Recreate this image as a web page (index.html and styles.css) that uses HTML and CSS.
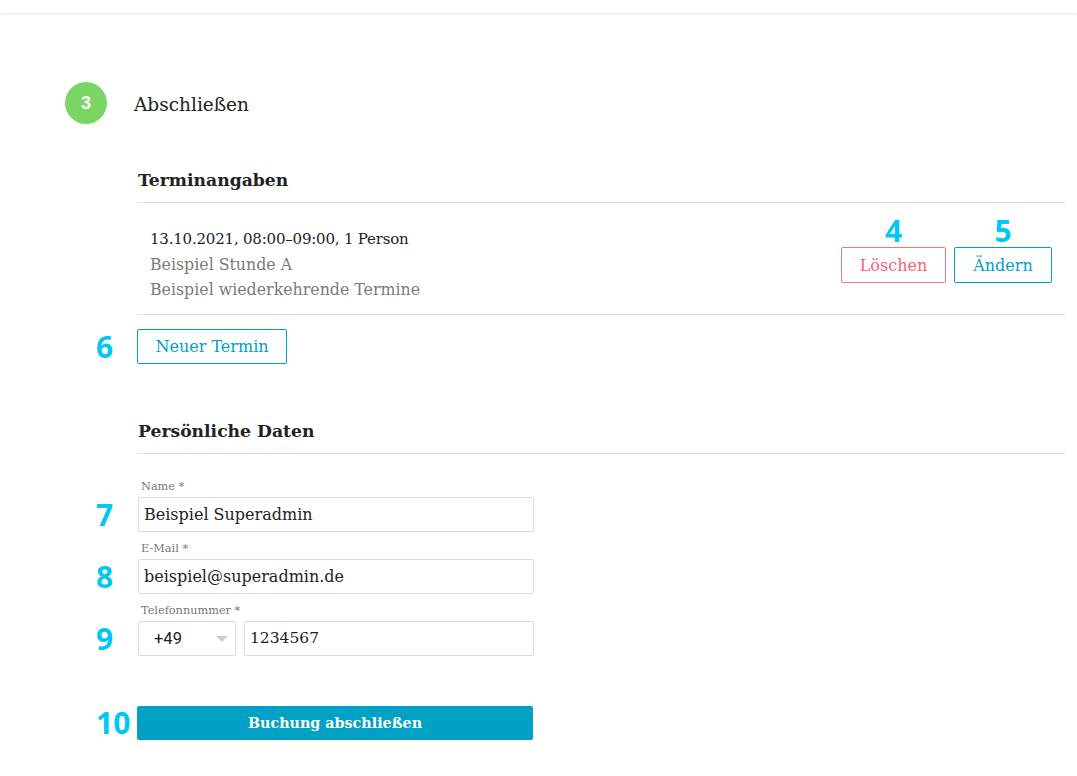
FILE: index.html
```html
<!DOCTYPE html>
<html lang="de">
<head>
<meta charset="utf-8">
<title>Abschließen</title>
<link rel="stylesheet" href="styles.css">
</head>
<body>
<div class="topbar"></div>
<main class="page">
  <div class="step">
    <div class="step-num">3</div>
    <div class="step-title">Abschließen</div>
  </div>

  <section class="block">
    <div class="gutter"></div>
    <div class="content">
      <h2 class="section-title">Terminangaben</h2>
      <div class="entry">
        <div class="entry-text">
          <div class="entry-main">13.10.2021, 08:00–09:00, 1 Person</div>
          <div class="entry-sub">Beispiel Stunde A</div>
          <div class="entry-sub">Beispiel wiederkehrende Termine</div>
        </div>
        <div class="entry-actions">
          <div class="action">
            <span class="anno">4</span>
            <button class="btn btn-danger">Löschen</button>
          </div>
          <div class="action">
            <span class="anno">5</span>
            <button class="btn btn-outline">Ändern</button>
          </div>
        </div>
      </div>
    </div>
  </section>

  <section class="row row-new">
    <span class="anno gutter-anno">6</span>
    <div><button class="btn btn-outline btn-new">Neuer Termin</button></div>
  </section>

  <section class="block block-personal">
    <div class="gutter"></div>
    <div class="content">
      <h2 class="section-title">Persönliche Daten</h2>
    </div>
  </section>

  <section class="row field first">
    <span class="anno gutter-anno">7</span>
    <div class="field-body">
      <label class="label">Name *</label>
      <div class="input">Beispiel Superadmin</div>
    </div>
  </section>

  <section class="row field">
    <span class="anno gutter-anno">8</span>
    <div class="field-body">
      <label class="label">E-Mail *</label>
      <div class="input">beispiel@superadmin.de</div>
    </div>
  </section>

  <section class="row field">
    <span class="anno gutter-anno">9</span>
    <div class="field-body">
      <label class="label">Telefonnummer *</label>
      <div class="phone">
        <div class="input select"><span class="code">+49</span><span class="caret"></span></div>
        <div class="input phone-num">1234567</div>
      </div>
    </div>
  </section>

  <section class="row submit-row">
    <span class="anno gutter-anno">10</span>
    <div><button class="btn-submit">Buchung abschließen</button></div>
  </section>
</main>
</body>
</html>
```

FILE: styles.css
```css
* { box-sizing: border-box; }
html, body { margin: 0; background: #fff; }
body {
  font-family: "DejaVu Serif", "Liberation Serif", serif;
  color: #222;
  width: 1077px;
  height: 776px;
  overflow: hidden;
}
.topbar {
  height: 13px;
  background: #fff;
  box-shadow: 0 1px 3px rgba(0,0,0,0.12);
  position: relative;
}
.page { padding-right: 12px; }

.step {
  display: flex;
  align-items: center;
  gap: 27px;
  margin: 69px 0 0 65px;
  height: 42px;
}
.step-num {
  width: 42px; height: 42px;
  border-radius: 50%;
  background: #7ad563;
  color: #fff;
  font-family: "Liberation Sans", Arial, sans-serif;
  font-weight: bold;
  font-size: 18px;
  display: flex; align-items: center; justify-content: center;
}
.step-title { font-size: 18.5px; color: #222; padding-top: 2px; }

.block, .row {
  display: grid;
  grid-template-columns: 137px 1fr;
}
.section-title {
  margin: 44px 0 0;
  font-size: 17.2px;
  font-weight: bold;
  line-height: 24px;
  padding: 0 0 10px 1px;
  border-bottom: 1px solid #d6e0e7;
  color: #222;
}
.entry {
  display: flex;
  justify-content: space-between;
  align-items: flex-start;
  padding: 24px 13px 12px 13px;
  border-bottom: 1px solid #d6e0e7;
}
.entry-text { line-height: 25px; }
.entry-main { color: #222; font-size: 15px; letter-spacing: -0.2px; }
.entry-sub { color: #7a7a7a; font-size: 15.8px; }
.entry-actions { display: flex; gap: 8px; margin-top: -10px; }
.action { display: flex; flex-direction: column; align-items: center; }
.anno {
  font-family: "Open Sans", "Liberation Sans", sans-serif;
  font-weight: 700;
  font-size: 30px;
  line-height: 28px;
  color: #00c8f2;
  height: 28px;
  margin-bottom: 2px;
}
.btn {
  font-family: inherit;
  font-size: 16px;
  height: 36px;
  background: #fff;
  border-radius: 2px;
  padding: 0;
  cursor: pointer;
}
.btn-danger { width: 105px; border: 1px solid #f07283; color: #ee6577; }
.btn-outline { width: 98px; border: 1px solid #00a0c6; color: #00a0c6; }
.btn-new { width: 150px; height: 35px; }
.row-new { margin-top: 14px; align-items: center; }
.gutter-anno { padding-left: 96px; margin: 0; height: auto; line-height: 35px; }

.block-personal .section-title { margin-top: 55px; }

.field { align-items: end; margin-top: 9px; }
.field.first { margin-top: 25px; }
.label {
  display: block;
  font-size: 11.3px;
  line-height: 16px;
  color: #777;
  padding-left: 3px;
  margin-bottom: 2px;
}
.field-body { width: 397px; padding-left: 1px; }
.input {
  height: 35px;
  border: 1px solid #dcdcdc;
  border-radius: 2px;
  font-size: 16px;
  line-height: 33px;
  padding: 0 5px;
  color: #222;
}
.phone { display: flex; gap: 8px; }
.select {
  width: 98px;
  display: flex; align-items: center; justify-content: space-between;
  padding: 0 5px 0 15px;
  font-family: "Roboto", "Liberation Sans", sans-serif;
  font-size: 16.5px;
}
.caret {
  width: 0; height: 0;
  border-left: 6px solid transparent;
  border-right: 6px solid transparent;
  border-top: 6px solid #ccc;
  margin-right: 2px;
}
.phone-num { flex: 1; padding-left: 5px; font-size: 15.5px; }

.submit-row { margin-top: 49px; align-items: center; }
.btn-submit {
  width: 396px;
  height: 34px;
  border: 0;
  border-radius: 2px;
  background: #00a1c5;
  color: #fff;
  font-family: inherit;
  font-size: 14.3px;
  font-weight: bold;
  cursor: pointer;
}
```
